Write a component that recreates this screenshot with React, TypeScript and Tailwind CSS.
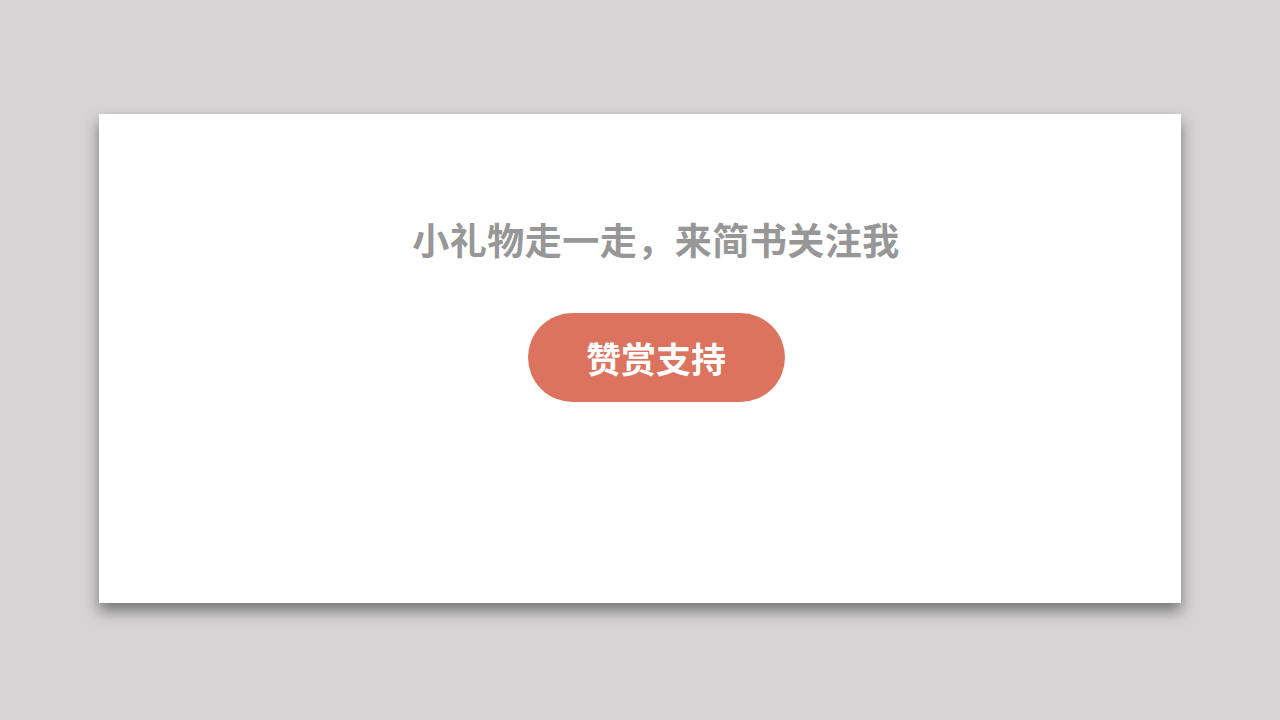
import React from "react";

export default function App() {
  return (
    <div className="h-[720px] w-[1280px] bg-[#d6d4d5] pl-[99px] pt-[114px] font-['Noto_Sans_CJK_SC',sans-serif]">
      <div className="flex h-[489px] w-[1082px] flex-col items-center bg-white pl-[32px] pt-[103px] shadow-[0_8px_14px_rgba(0,0,0,0.45)]">
        <h2 className="text-[37px] font-bold leading-[44px] tracking-[0.5px] text-[#979797]">
          小礼物走一走，来简书关注我
        </h2>
        <button
          type="button"
          className="mt-[52px] flex h-[89px] w-[257px] items-center justify-center rounded-full bg-[#dc735f] text-[35px] font-bold leading-none text-white"
        >
          赞赏支持
        </button>
      </div>
    </div>
  );
}
